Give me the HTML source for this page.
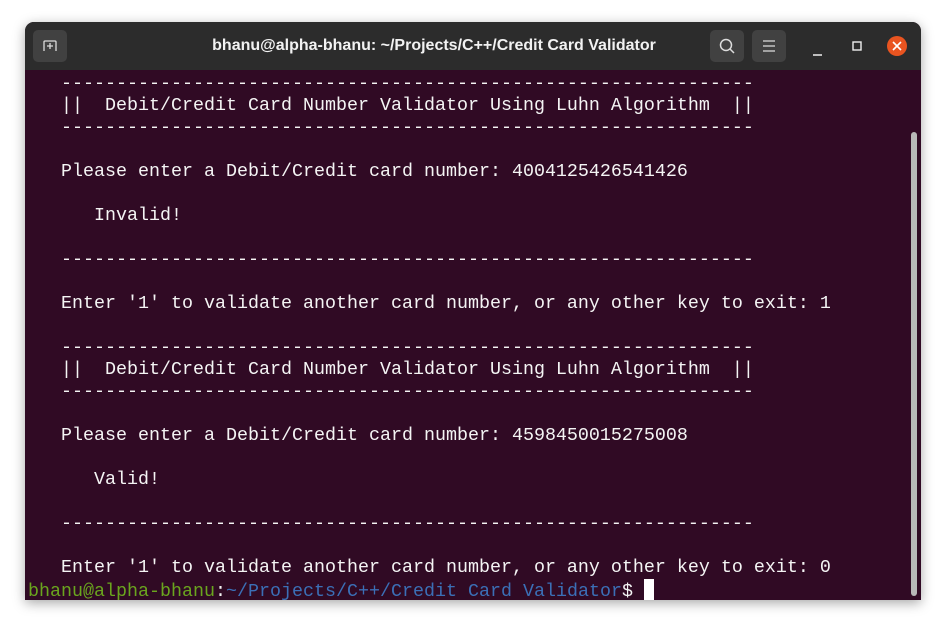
<!DOCTYPE html>
<html><head><meta charset="utf-8"><style>
html,body{margin:0;padding:0;width:946px;height:629px;background:#fff;overflow:hidden}
.win{position:absolute;left:25px;top:22px;width:896px;height:578px;background:#300a24;border-radius:9px 9px 0 0;box-shadow:0 3px 12px rgba(0,0,0,.35);overflow:hidden}
.tb{position:absolute;left:0;top:0;width:896px;height:48px;background:#2c2c2c}
.title{position:absolute;left:0;width:818px;top:0;font:bold 16px "Liberation Sans",sans-serif;line-height:48px;text-align:center;color:#f2f2f2}
.btn{position:absolute;top:8px;width:34px;height:32px;background:#414141;border-radius:5px}
pre{position:absolute;left:3px;top:51px;margin:0;font:18.33px "Liberation Mono",monospace;line-height:22px;color:#f4f4f4;white-space:pre}
.g{color:#6aa51e}.b{color:#3b6fb6}
.cur{display:inline-block;width:10px;height:21px;background:#fff;vertical-align:-4px}
.sb{position:absolute;left:886px;top:110px;width:6px;height:464px;background:#b8b8b8;border-radius:3px}
</style></head><body>
<div class="win">
<div class="tb">
<div class="btn" style="left:8px"><svg width="34" height="32"><path d="M11 21V12q0-1 1-1h10q1 0 1 1v9" fill="none" stroke="#ddd" stroke-width="1.3"/><path d="M17 13v6M14 16h6" stroke="#ddd" stroke-width="1.3"/></svg></div>
<div class="title">bhanu@alpha-bhanu: ~/Projects/C++/Credit Card Validator</div>
<div class="btn" style="left:685px"><svg width="34" height="32"><circle cx="16" cy="15" r="5.5" fill="none" stroke="#ddd" stroke-width="1.5"/><path d="M20 19l4 4" stroke="#ddd" stroke-width="1.5"/></svg></div>
<div class="btn" style="left:727px"><svg width="34" height="32"><path d="M11 11h12M11 16h12M11 21h12" stroke="#ddd" stroke-width="1.3"/></svg></div>
<svg style="position:absolute;left:780px;top:10px" width="116" height="30"><path d="M8 23h9" stroke="#eee" stroke-width="1.5"/><rect x="48" y="10" width="8" height="8" fill="none" stroke="#eee" stroke-width="1.4"/><circle cx="92" cy="14" r="10" fill="#e95420"/><path d="M88 10l8 8M96 10l-8 8" stroke="#fff" stroke-width="1.6"/></svg>
</div>
<pre>   ---------------------------------------------------------------
   ||  Debit/Credit Card Number Validator Using Luhn Algorithm  ||
   ---------------------------------------------------------------

   Please enter a Debit/Credit card number: 4004125426541426

      Invalid!

   ---------------------------------------------------------------

   Enter '1' to validate another card number, or any other key to exit: 1

   ---------------------------------------------------------------
   ||  Debit/Credit Card Number Validator Using Luhn Algorithm  ||
   ---------------------------------------------------------------

   Please enter a Debit/Credit card number: 4598450015275008

      Valid!

   ---------------------------------------------------------------

   Enter '1' to validate another card number, or any other key to exit: 0
<span class="g">bhanu@alpha-bhanu</span>:<span class="b">~/Projects/C++/Credit Card Validator</span>$ <span class="cur"></span></pre>
<div class="sb"></div>
</div>
</body></html>
